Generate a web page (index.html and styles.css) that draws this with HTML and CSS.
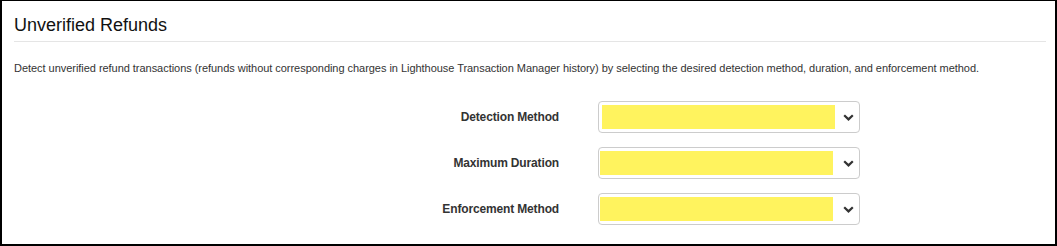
FILE: index.html
```html
<!DOCTYPE html>
<html>
<head>
<meta charset="utf-8">
<link rel="stylesheet" href="styles.css">
</head>
<body>
<div class="panel">
  <h3 class="title">Unverified Refunds</h3>
  <p class="desc">Detect unverified refund transactions (refunds without corresponding charges in Lighthouse Transaction Manager history) by selecting the desired detection method, duration, and enforcement method.</p>
  <div class="form">
    <label class="label">Detection Method</label>
    <div class="select">
      <span class="value value-wide"></span>
      <svg class="chev" width="11" height="7" viewBox="0 0 11 7"><path d="M1.2 1.2 L5.5 5.4 L9.8 1.2" fill="none" stroke="#333" stroke-width="2.2"/></svg>
    </div>
    <label class="label">Maximum Duration</label>
    <div class="select">
      <span class="value"></span>
      <svg class="chev" width="11" height="7" viewBox="0 0 11 7"><path d="M1.2 1.2 L5.5 5.4 L9.8 1.2" fill="none" stroke="#333" stroke-width="2.2"/></svg>
    </div>
    <label class="label">Enforcement Method</label>
    <div class="select">
      <span class="value"></span>
      <svg class="chev" width="11" height="7" viewBox="0 0 11 7"><path d="M1.2 1.2 L5.5 5.4 L9.8 1.2" fill="none" stroke="#333" stroke-width="2.2"/></svg>
    </div>
  </div>
</div>
</body>
</html>
```
FILE: styles.css
```css
html, body {
  margin: 0;
  padding: 0;
  background: #fff;
}
body {
  font-family: "Liberation Sans", Arial, sans-serif;
  color: #333;
}
.panel {
  box-sizing: border-box;
  width: 1057px;
  height: 246px;
  border: 2px solid #000;
  border-top-width: 1px;
  padding: 0 9px 0 12px;
}
.title {
  margin: 0;
  padding: 14px 0 6px 0;
  font-size: 18px;
  line-height: 20px;
  font-weight: normal;
  color: #111;
  border-bottom: 1px solid #e5e5e5;
}
.desc {
  margin: 18px 0 0 0;
  font-size: 11px;
  line-height: 17px;
  color: #333;
  white-space: nowrap;
  letter-spacing: -0.04px;
}
.form {
  display: grid;
  grid-template-columns: 545px 262px;
  column-gap: 39px;
  row-gap: 14px;
  margin-top: 24px;
  align-items: center;
}
.label {
  text-align: right;
  font-weight: bold;
  font-size: 12px;
  letter-spacing: -0.15px;
  color: #333;
}
.select {
  box-sizing: border-box;
  height: 32px;
  border: 1px solid #ccc;
  border-radius: 4px;
  padding: 3px 0 3px 1px;
  display: flex;
  align-items: stretch;
}
.value {
  width: 233px;
  background: #fff35e;
}
.value-wide {
  margin-left: 2px;
}
.chev {
  align-self: center;
  margin-left: auto;
  margin-right: 5px;
}
```
